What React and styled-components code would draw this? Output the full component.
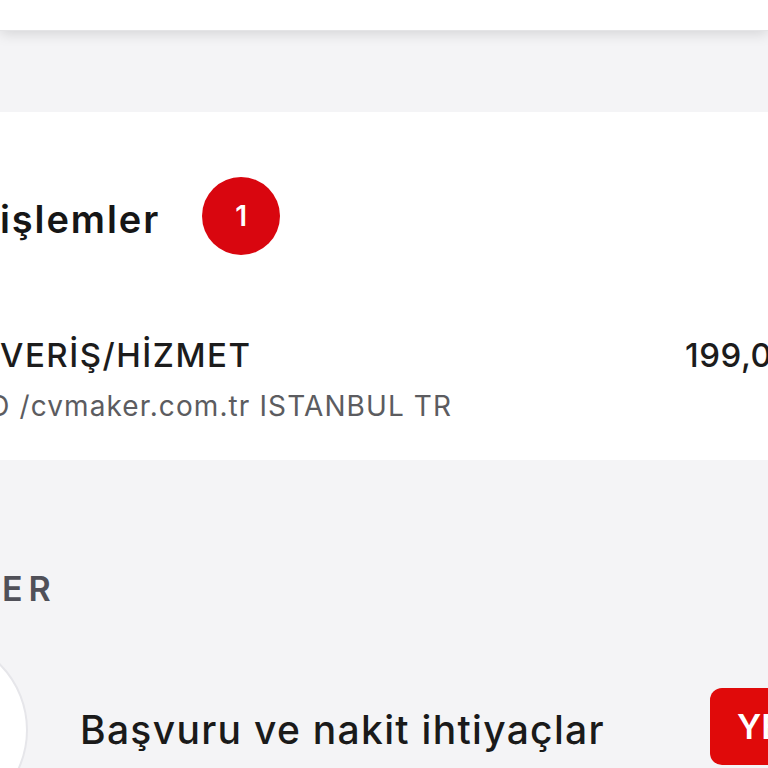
import React from "react";
import styled, { createGlobalStyle } from "styled-components";

const Global = createGlobalStyle`
  html, body { margin: 0; padding: 0; background: #f4f4f6; }
  body { font-family: Inter, "Noto Sans", sans-serif; overflow: hidden; }
`;

const Viewport = styled.div`
  width: 768px;
  height: 768px;
  overflow: hidden;
  background: #f4f4f6;
  display: flex;
  flex-direction: column;
  & > * { flex-shrink: 0; }
`;

const Header = styled.div`
  height: 30px;
  background: #fff;
  border-bottom: 1px solid #e4e4e6;
  box-shadow: 0 3px 14px rgba(0, 0, 0, 0.13);
  position: relative;
  z-index: 1;
`;

const Card = styled.section`
  margin-top: 81px;
  background: #fff;
  height: 348px;
  padding-top: 65px;
  box-sizing: border-box;
  display: flex;
  flex-direction: column;
`;

const TitleRow = styled.div`
  display: flex;
  align-items: center;
  gap: 42px;
`;

const Title = styled.h2`
  margin: 0;
  font-size: 38px;
  line-height: 46px;
  font-weight: 600;
  color: #161616;
  letter-spacing: 1.9px;
  padding-top: 6px;
`;

const Badge = styled.span`
  width: 78px;
  height: 78px;
  border-radius: 50%;
  background: #d9060f;
  color: #fff;
  display: flex;
  align-items: center;
  justify-content: center;
  font-size: 28px;
  font-weight: 600;
`;

const TxRow = styled.div`
  margin-top: 80px;
  display: flex;
  align-items: flex-start;
`;

const TxInfo = styled.div`
  flex: 1;
  min-width: 0;
  display: flex;
  flex-direction: column;
  gap: 13px;
`;

const TxName = styled.div`
  font-size: 33px;
  line-height: 40px;
  font-weight: 500;
  color: #1c1c1c;
  letter-spacing: 1.5px;
  white-space: nowrap;
`;

const TxDetail = styled.div`
  font-size: 28px;
  line-height: 36px;
  font-weight: 400;
  color: #5c5c60;
  letter-spacing: 1.1px;
  white-space: nowrap;
  margin-left: ${(p) => p.$shift}px;
`;

const Amount = styled.div`
  width: 200px;
  margin-right: -117px;
  flex-shrink: 0;
  font-size: 33px;
  line-height: 40px;
  font-weight: 500;
  color: #1c1c1c;
  letter-spacing: 0.5px;
  white-space: nowrap;
`;

const SectionLabel = styled.div`
  margin-top: 109px;
  font-size: 34px;
  line-height: 40px;
  font-weight: 600;
  letter-spacing: 6px;
  color: #505058;
  padding-left: 2px;
`;

const OfferRow = styled.div`
  margin-top: 27px;
  display: flex;
  align-items: center;
  height: 188px;
`;

const IconCircle = styled.div`
  width: 188px;
  height: 188px;
  flex-shrink: 0;
  border-radius: 50%;
  background: #fff;
  border: 2px solid #e6e6ea;
  box-sizing: border-box;
  margin-left: -160px;
`;

const OfferText = styled.div`
  flex: 1;
  margin-left: 52px;
  font-size: 39px;
  line-height: 48px;
  font-weight: 500;
  letter-spacing: 1.3px;
  color: #1a1a1a;
  white-space: nowrap;
`;

const NewButton = styled.button`
  width: 120px;
  height: 77px;
  margin-right: -62px;
  flex-shrink: 0;
  border: none;
  border-radius: 12px;
  background: #e00a0a;
  color: #fff;
  font-family: inherit;
  font-size: 34px;
  font-weight: 600;
  text-align: left;
  padding: 0 0 0 27px;
  white-space: nowrap;
  margin-top: -7px;
`;

export default function App() {
  return (
    <>
      <Global />
      <Viewport>
        <Header />
        <Card>
          <TitleRow>
            <Title>işlemler</Title>
            <Badge>1</Badge>
          </TitleRow>
          <TxRow>
            <TxInfo>
              <TxName>VERİŞ/HİZMET</TxName>
              <TxDetail $shift={-12}>O /cvmaker.com.tr ISTANBUL TR</TxDetail>
            </TxInfo>
            <Amount>199,00 TL</Amount>
          </TxRow>
        </Card>
        <SectionLabel>ER</SectionLabel>
        <OfferRow>
          <IconCircle />
          <OfferText>Başvuru ve nakit ihtiyaçlar</OfferText>
          <NewButton>YENİ</NewButton>
        </OfferRow>
      </Viewport>
    </>
  );
}
